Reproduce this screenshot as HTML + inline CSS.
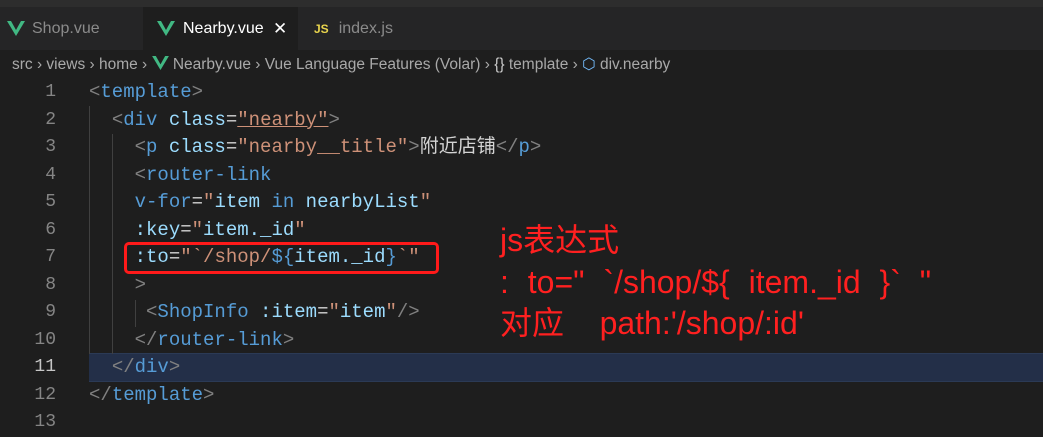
<html><head><style>
body{margin:0;width:1043px;height:425px;background:#1e1e1e;overflow:hidden;font-family:"Liberation Sans","Noto Sans CJK SC",sans-serif;position:relative}
.top{position:absolute;left:0;top:0;width:1043px;height:7px;background:#2d2d2d}
.tabs{position:absolute;top:7px;left:0;width:1043px;height:43px;background:#252526}
.tab{position:absolute;top:0;height:43px;line-height:43px;font-size:16px;color:#8b8b8b}
.v{position:absolute;top:0}
.bc{position:absolute;top:51px;left:12px;height:28px;line-height:28px;font-size:15.5px;color:#a9a9a9;white-space:pre}
.code{position:absolute;left:0;top:79px;font-family:"Liberation Mono","Noto Sans CJK SC",monospace;font-size:19px}
.ln{position:absolute;left:0;width:56px;text-align:right;color:#858585;height:27.5px;line-height:27.5px;font-size:18px}
.l{position:absolute;left:89px;height:27.5px;line-height:27.5px;white-space:pre;color:#d4d4d4}
.p{color:#808080}.t{color:#569cd6}.a{color:#9cdcfe}.s{color:#ce9178}.c{color:#4ec9b0}
.red{position:absolute;color:#ff2020;font-size:32px;line-height:40px;white-space:pre;font-family:"Liberation Sans","Noto Sans CJK SC",sans-serif}
</style></head><body>
<div class="top"></div>
<div class="tabs">
<div class="tab" style="left:0;width:143px"><svg class="v" style="left:7px;top:14px" width="18" height="15" viewBox="0 0 18 15"><path d="M0 0h4l5 9 5-9h4L9 15z" fill="#41b883"/></svg><span style="position:absolute;left:32px">Shop.vue</span></div>
<div class="tab" style="left:143px;width:155px;background:#1e1e1e;color:#fff"><svg class="v" style="left:14px;top:14px" width="18" height="15" viewBox="0 0 18 15"><path d="M0 0h4l5 9 5-9h4L9 15z" fill="#41b883"/></svg><span style="position:absolute;left:40px">Nearby.vue</span><span style="position:absolute;left:130px;font-size:17px">✕</span></div>
<div class="tab" style="left:314px"><span style="color:#e8d44d;font-weight:bold;font-size:12px">JS</span><span style="margin-left:10px">index.js</span></div>
</div>
<div class="bc">src › views › home › <svg width="17" height="14" viewBox="0 0 18 15" style="vertical-align:-1px"><path d="M0 0h4l5 9 5-9h4L9 15z" fill="#41b883"/></svg> Nearby.vue › Vue Language Features (Volar) › <span style="color:#ccc">{}</span> template › <span style="color:#75beff">⬡</span> div.nearby</div>
<div style="position:absolute;left:89px;top:353px;width:954px;height:27px;background:#232f48;border-top:1px solid #2b3a55;border-bottom:1px solid #2b3a55"></div>
<div style="position:absolute;left:89px;top:106px;width:1px;height:248px;background:#404040"></div>
<div style="position:absolute;left:112px;top:134px;width:1px;height:220px;background:#404040"></div>
<div style="position:absolute;left:135px;top:300px;width:1px;height:27px;background:#404040"></div>
<div class="code">
<div class="ln" style="top:0">1</div><div class="ln" style="top:27.5px">2</div><div class="ln" style="top:55px">3</div><div class="ln" style="top:82.5px">4</div><div class="ln" style="top:110px">5</div><div class="ln" style="top:137.5px">6</div><div class="ln" style="top:165px">7</div><div class="ln" style="top:192.5px">8</div><div class="ln" style="top:220px">9</div><div class="ln" style="top:247.5px">10</div><div class="ln" style="top:275px;color:#c6c6c6">11</div><div class="ln" style="top:302.5px">12</div><div class="ln" style="top:330px">13</div>
<div class="l" style="top:0"><span class="p">&lt;</span><span class="t">template</span><span class="p">&gt;</span></div>
<div class="l" style="top:27.5px">  <span class="p">&lt;</span><span class="t">div</span> <span class="a">class</span>=<span class="s" style="text-decoration:underline;text-decoration-color:#ce9178">"nearby"</span><span class="p">&gt;</span></div>
<div class="l" style="top:55px">    <span class="p">&lt;</span><span class="t">p</span> <span class="a">class</span>=<span class="s">"nearby__title"</span><span class="p">&gt;</span>附近店铺<span class="p">&lt;/</span><span class="t">p</span><span class="p">&gt;</span></div>
<div class="l" style="top:82.5px">    <span class="p">&lt;</span><span class="t">router-link</span></div>
<div class="l" style="top:110px">    <span class="t">v-for</span>=<span class="s">"</span><span class="a">item</span> <span class="t">in</span> <span class="a">nearbyList</span><span class="s">"</span></div>
<div class="l" style="top:137.5px">    <span class="a">:key</span>=<span class="s">"</span><span class="a">item._id</span><span class="s">"</span></div>
<div class="l" style="top:165px">    <span class="a">:to</span>=<span class="s">"`/shop/</span><span class="t">${</span><span class="a">item._id</span><span class="t">}</span><span class="s">`"</span></div>
<div class="l" style="top:192.5px">    <span class="p">&gt;</span></div>
<div class="l" style="top:220px">     <span class="p">&lt;</span><span class="t">ShopInfo</span> <span class="a">:item</span>=<span class="s">"</span><span class="a">item</span><span class="s">"</span><span class="p">/&gt;</span></div>
<div class="l" style="top:247.5px">    <span class="p">&lt;/</span><span class="t">router-link</span><span class="p">&gt;</span></div>
<div class="l" style="top:275px">  <span class="p">&lt;/</span><span class="t">div</span><span class="p">&gt;</span></div>
<div class="l" style="top:302.5px"><span class="p">&lt;/</span><span class="t">template</span><span class="p">&gt;</span></div>
</div>
<div style="position:absolute;left:124px;top:242px;width:309px;height:26px;border:3px solid #ff1a1a;border-radius:5px"></div>
<div class="red" style="left:500px;top:220px">js表达式</div>
<div class="red" style="left:500px;top:262px;word-spacing:10px">: to=" `/shop/${ item._id }` "</div>
<div class="red" style="left:500px;top:303px">对应    path:'/shop/:id'</div>
</body></html>
